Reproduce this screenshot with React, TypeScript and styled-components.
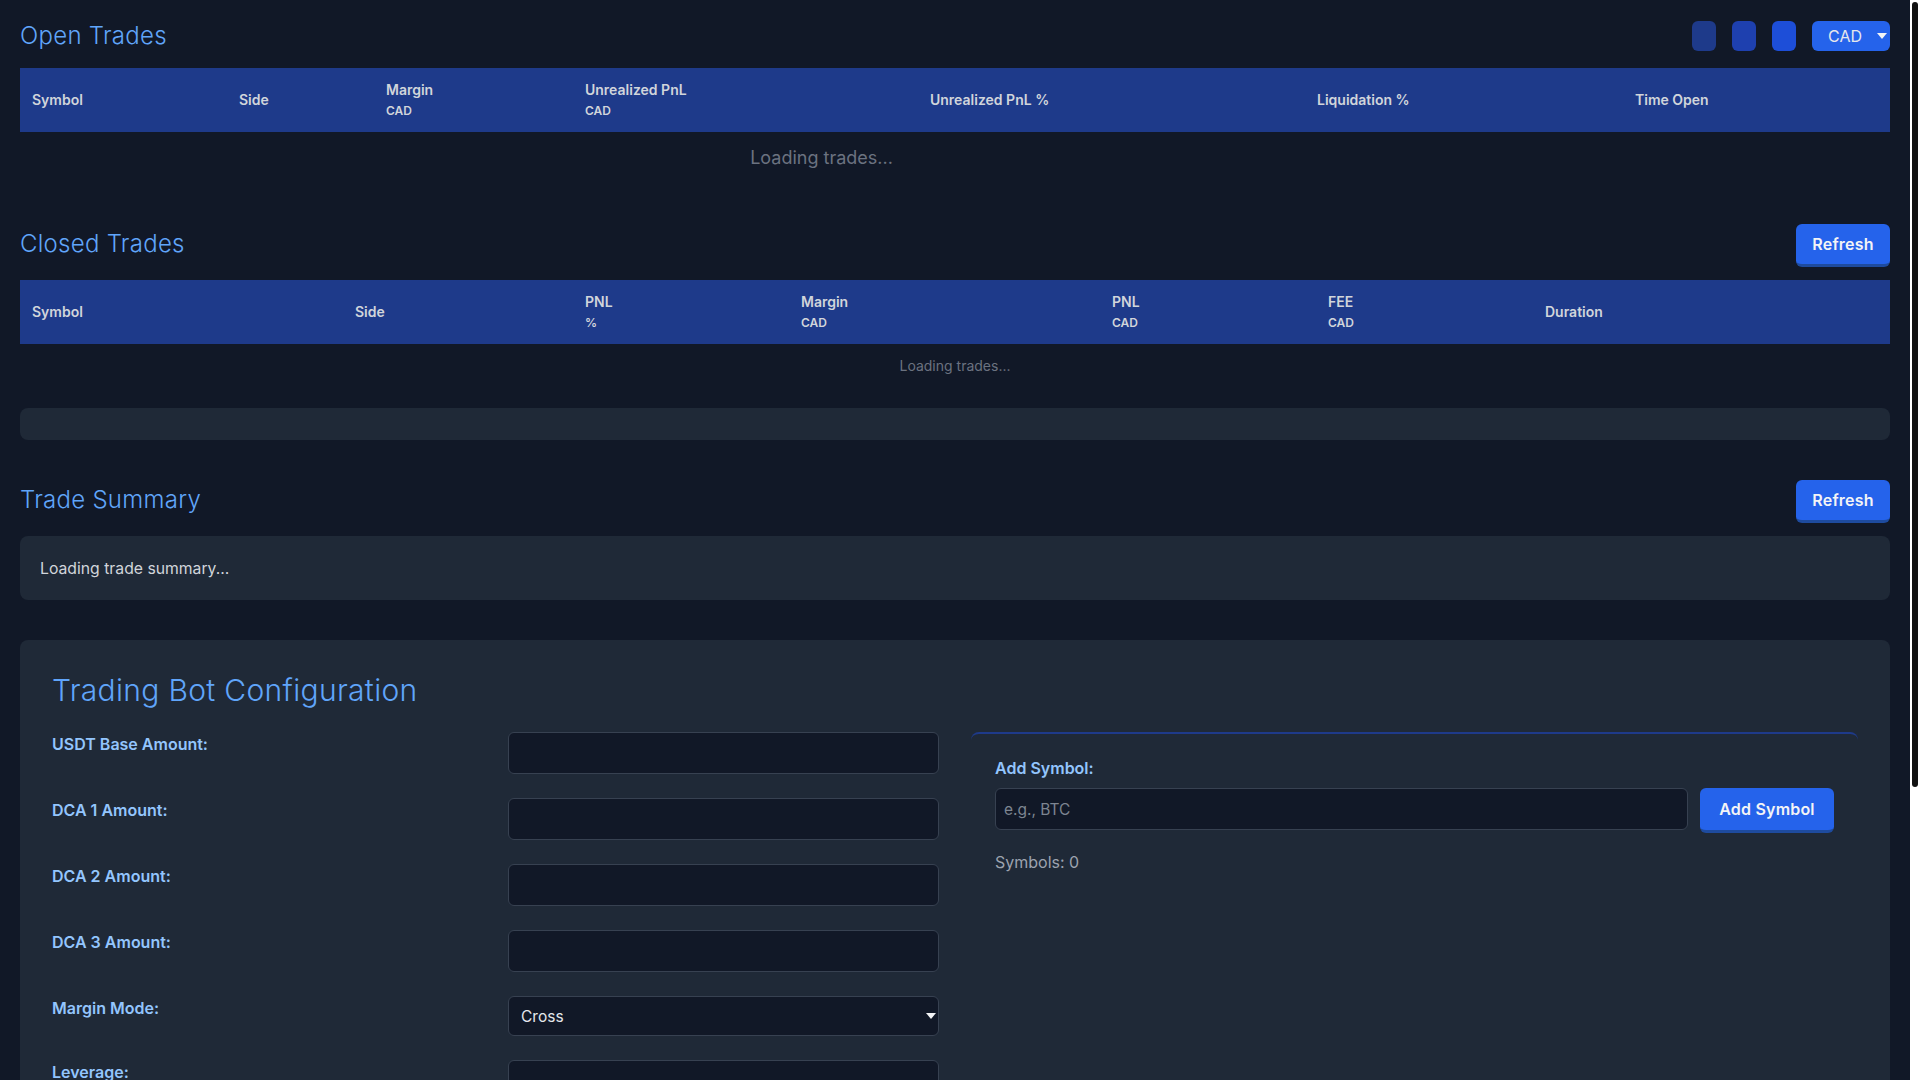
import React from "react";
import styled, { createGlobalStyle } from "styled-components";

const Global = createGlobalStyle`
  html, body { margin: 0; padding: 0; background: #111827; }
  body { font-family: Inter, "Liberation Sans", sans-serif; font-optical-sizing: none; color: #e5e7eb; font-size: 16px; line-height: 1.5; }
  * { box-sizing: border-box; }
`;

const Page = styled.div`
  padding: 16px 30px 20px 20px;
`;

const ScrollTrack = styled.div`
  position: fixed;
  top: 0;
  right: 0;
  bottom: 0;
  width: 10px;
  padding: 2px;
  background: #ffffff;
`;

const ScrollThumb = styled.div`
  height: 785px;
  border-radius: 3px;
  background: #111111;
`;

const Section = styled.section`
  margin-bottom: 40px;
`;

const SectionHeader = styled.header`
  display: flex;
  align-items: center;
  justify-content: space-between;
  min-height: 38px;
  margin-bottom: 13px;
`;

const Title = styled.h2`
  align-self: flex-start;
  margin: 0;
  font-size: 24px;
  line-height: 39px;
  font-weight: 350;
  letter-spacing: 0.27px;
  color: #60a5fa;
`;

const Controls = styled.div`
  display: flex;
  align-items: center;
  gap: 16px;
`;

const SquareButton = styled.button<{ $bg: string }>`
  width: 24px;
  height: 30px;
  padding: 0;
  border: 0;
  border-radius: 6px;
  background: ${(p) => p.$bg};
`;

const SelectWrap = styled.div<{ $width?: string }>`
  position: relative;
  width: ${(p) => p.$width || "100%"};
  &::after {
    content: "";
    position: absolute;
    top: 50%;
    right: 3px;
    margin-top: -3px;
    border-left: 5px solid transparent;
    border-right: 5px solid transparent;
    border-top: 6px solid #f3f4f6;
    pointer-events: none;
  }
`;

const CurrencySelect = styled.select`
  display: block;
  width: 100%;
  height: 30px;
  padding: 0 0 0 16px;
  border: 0;
  border-radius: 6px;
  appearance: none;
  background: #2563eb;
  color: #e5e7eb;
  font: 400 16px Inter, "Liberation Sans", sans-serif;
`;

const ActionButton = styled.button`
  flex: none;
  width: 94px;
  height: 43px;
  padding: 0;
  border: 0;
  border-bottom: 3px solid #1e4b9e;
  border-radius: 6px;
  background: #2563eb;
  color: #f3f4f6;
  font: 600 16px Inter, "Liberation Sans", sans-serif;
  letter-spacing: 0.2px;
`;

const AddButton = styled(ActionButton)`
  width: 134px;
  height: 45px;
`;

const HeaderRow = styled.div<{ $cols: string }>`
  display: grid;
  grid-template-columns: ${(p) => p.$cols};
  height: 64px;
  background: #1e3a8a;
`;

const HeaderCell = styled.div`
  display: flex;
  flex-direction: column;
  justify-content: center;
  padding: 0 12px 1px;
  font-size: 14px;
  line-height: 21px;
  font-weight: 600;
  color: #d1d5db;
`;

const Unit = styled.span`
  margin-top: 2px;
  font-size: 12px;
  line-height: 18px;
`;

const BodyRow = styled.div<{ $cols: string; $height: number }>`
  display: grid;
  grid-template-columns: ${(p) => p.$cols};
  height: ${(p) => p.$height}px;
  align-items: center;
`;

const LoadingCell = styled.div<{ $span: number; $size: number }>`
  grid-column: 1 / span ${(p) => p.$span};
  padding-bottom: 1px;
  text-align: center;
  font-size: ${(p) => p.$size}px;
  color: #6b7280;
`;

const EmptyBar = styled.div`
  height: 32px;
  margin-top: 20px;
  border-radius: 8px;
  background: #1f2937;
`;

const SummaryCard = styled.div`
  height: 64px;
  padding: 21px 20px 19px;
  border-radius: 8px;
  background: #1f2937;
  font-size: 15.75px;
  line-height: 24px;
  color: #d1d5db;
`;

const ConfigCard = styled.section`
  min-height: 818px;
  padding: 32px;
  border-radius: 8px;
  background: #1f2937;
`;

const ConfigTitle = styled.h2`
  margin: 0 0 24px;
  font-size: 30px;
  line-height: 36px;
  font-weight: 350;
  letter-spacing: 0.32px;
  color: #60a5fa;
`;

const ConfigColumns = styled.div`
  display: grid;
  grid-template-columns: 1fr 1fr;
  gap: 32px;
  align-items: start;
`;

const FormColumn = styled.div`
  display: flex;
  flex-direction: column;
  gap: 24.4px;
`;

const FormRow = styled.div`
  display: grid;
  grid-template-columns: 1fr 1fr;
  column-gap: 25px;
`;

const FieldLabel = styled.label`
  display: block;
  font-size: 16px;
  line-height: 24px;
  font-weight: 600;
  color: #93c5fd;
`;

const TextInput = styled.input`
  display: block;
  width: 100%;
  height: 41.6px;
  padding: 9px 8px 7px;
  border: 1px solid #374151;
  border-radius: 6px;
  background: #111827;
  color: #e5e7eb;
  font: 400 15.5px Inter, "Liberation Sans", sans-serif;
  &::placeholder { color: #7d8591; }
`;

const FormSelect = styled.select`
  display: block;
  width: 100%;
  height: 39.6px;
  padding: 2px 20px 0 12px;
  border: 1px solid #374151;
  border-radius: 6px;
  appearance: none;
  background: #111827;
  color: #e5e7eb;
  font: 400 15.5px Inter, "Liberation Sans", sans-serif;
`;

const SymbolPanel = styled.div`
  height: 300px;
  padding: 22px 24px;
  border-top: 2px solid #1e3a8a;
  border-radius: 8px;
`;

const PanelLabel = styled(FieldLabel)`
  margin: 0 0 8px;
`;

const AddRow = styled.div`
  display: flex;
  align-items: flex-start;
  gap: 12.5px;
`;

const SymbolCount = styled.div`
  margin-top: 17px;
  color: #9ca3af;
`;

const openCols = "207px 147px 199px 345px 387px 318px 1fr";
const closedCols = "323px 230px 216px 311px 216px 217px 1fr";

type Col = { name: string; unit?: string };

const openHeaders: Col[] = [
  { name: "Symbol" },
  { name: "Side" },
  { name: "Margin", unit: "CAD" },
  { name: "Unrealized PnL", unit: "CAD" },
  { name: "Unrealized PnL %" },
  { name: "Liquidation %" },
  { name: "Time Open" },
];

const closedHeaders: Col[] = [
  { name: "Symbol" },
  { name: "Side" },
  { name: "PNL", unit: "%" },
  { name: "Margin", unit: "CAD" },
  { name: "PNL", unit: "CAD" },
  { name: "FEE", unit: "CAD" },
  { name: "Duration" },
];

const TableHead = ({ cols, items }: { cols: string; items: Col[] }) => (
  <HeaderRow $cols={cols}>
    {items.map((c, i) => (
      <HeaderCell key={i}>
        {c.name}
        {c.unit && <Unit>{c.unit}</Unit>}
      </HeaderCell>
    ))}
  </HeaderRow>
);

const amountFields = ["USDT Base Amount:", "DCA 1 Amount:", "DCA 2 Amount:", "DCA 3 Amount:"];

export default function App() {
  return (
    <Page>
      <Global />
      <Section>
        <SectionHeader>
          <Title>Open Trades</Title>
          <Controls>
            <SquareButton $bg="#1e3a8a" />
            <SquareButton $bg="#1e40af" />
            <SquareButton $bg="#1d4ed8" />
            <SelectWrap $width="78px">
              <CurrencySelect defaultValue="CAD">
                <option>CAD</option>
                <option>USD</option>
              </CurrencySelect>
            </SelectWrap>
          </Controls>
        </SectionHeader>
        <TableHead cols={openCols} items={openHeaders} />
        <BodyRow $cols={openCols} $height={52}>
          <LoadingCell $span={6} $size={18}>Loading trades...</LoadingCell>
        </BodyRow>
      </Section>

      <Section>
        <SectionHeader>
          <Title>Closed Trades</Title>
          <ActionButton>Refresh</ActionButton>
        </SectionHeader>
        <TableHead cols={closedCols} items={closedHeaders} />
        <BodyRow $cols={closedCols} $height={44}>
          <LoadingCell $span={7} $size={14}>Loading trades...</LoadingCell>
        </BodyRow>
        <EmptyBar />
      </Section>

      <Section>
        <SectionHeader>
          <Title>Trade Summary</Title>
          <ActionButton>Refresh</ActionButton>
        </SectionHeader>
        <SummaryCard>Loading trade summary...</SummaryCard>
      </Section>

      <ConfigCard>
        <ConfigTitle>Trading Bot Configuration</ConfigTitle>
        <ConfigColumns>
          <FormColumn>
            {amountFields.map((f) => (
              <FormRow key={f}>
                <FieldLabel>{f}</FieldLabel>
                <TextInput />
              </FormRow>
            ))}
            <FormRow>
              <FieldLabel>Margin Mode:</FieldLabel>
              <SelectWrap>
                <FormSelect defaultValue="Cross">
                  <option>Cross</option>
                  <option>Isolated</option>
                </FormSelect>
              </SelectWrap>
            </FormRow>
            <FormRow>
              <FieldLabel>Leverage:</FieldLabel>
              <TextInput />
            </FormRow>
          </FormColumn>
          <SymbolPanel>
            <PanelLabel>Add Symbol:</PanelLabel>
            <AddRow>
              <TextInput placeholder="e.g., BTC" />
              <AddButton>Add Symbol</AddButton>
            </AddRow>
            <SymbolCount>Symbols: 0</SymbolCount>
          </SymbolPanel>
        </ConfigColumns>
      </ConfigCard>
      <ScrollTrack>
        <ScrollThumb />
      </ScrollTrack>
    </Page>
  );
}
